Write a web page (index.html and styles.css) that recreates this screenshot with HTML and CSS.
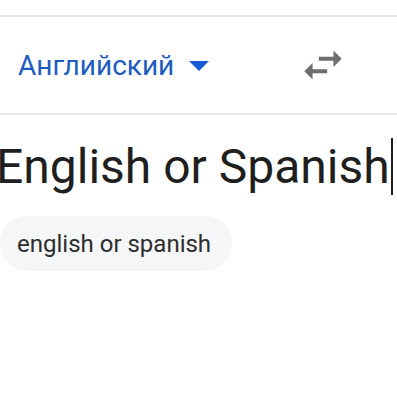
FILE: index.html
```html
<!DOCTYPE html>
<html lang="ru">
<head>
    <meta charset="UTF-8">
    <meta name="viewport" content="width=device-width, initial-scale=1.0">
    <title>Переводчик</title>
    <link rel="stylesheet" href="styles.css">
</head>
<body>
    <div id="topo"></div>
    <hr class="divisoria">

    <div id="idiomas">
        <button id="origem">
            <span class="nome">Английский</span>
            <svg class="seta" width="20" height="10" viewBox="7 10 10 5"><path d="M7 10l5 5 5-5z"/></svg>
        </button>
        <button id="trocar">
            <svg width="50" height="50" viewBox="0 0 24 24"><path d="M6.99 11L3 15l3.99 4v-3H14v-2H6.99v-3zM21 9l-3.99-4v3H10v2h7.01v3L21 9z"/></svg>
        </button>
    </div>
    <hr class="divisoria">

    <div id="entrada"><span class="texto">English or Spanish</span></div>

    <div id="sugestoes">
        <span class="chip">english or spanish</span>
    </div>
</body>
</html>
```

FILE: styles.css
```css
body {
    margin: 0;
    background: #fff;
    font-family: Roboto, "Noto Sans", sans-serif;
    overflow: hidden;
}

#topo {
    height: 15px;
}

.divisoria {
    border: none;
    border-top: 2px solid #e6e6e6;
    margin: 0;
    height: 0;
}

#idiomas {
    display: flex;
    align-items: center;
    height: 96px;
    padding: 0 49px 0 18px;
}

button {
    background: none;
    border: none;
    padding: 0;
    cursor: pointer;
    font-family: inherit;
}

#origem {
    display: flex;
    align-items: center;
    gap: 15px;
    color: #1d5bbf;
    font-size: 28px;
}

#origem .seta {
    fill: #1a5ad6;
    margin-top: 2px;
}

#trocar {
    margin-left: auto;
    display: flex;
}

#trocar svg {
    fill: #6e6e6e;
}

#entrada {
    margin: 23px 0 0 -4px;
    font-size: 48px;
    color: #1f1f1f;
    white-space: nowrap;
}

#entrada .texto {
    border-right: 2px solid #1f1f1f;
    padding-right: 1px;
}

#sugestoes {
    margin-top: 21px;
}

.chip {
    display: inline-flex;
    align-items: center;
    height: 55px;
    padding: 0 21px 0 17px;
    border-radius: 28px;
    background: #f5f6f8;
    color: #2d2d2d;
    font-size: 24px;
}
```
